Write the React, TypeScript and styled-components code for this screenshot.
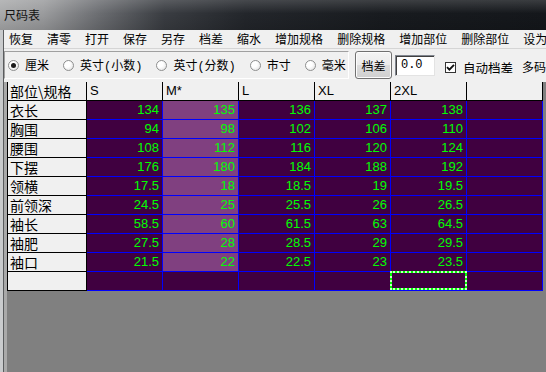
import React from 'react';
import styled, { createGlobalStyle, css } from 'styled-components';

const GlobalStyle = createGlobalStyle`
  html, body {
    margin: 0;
    padding: 0;
    background: #808080;
  }
`;

const CJK = `"Noto Sans CJK SC", "Liberation Sans", sans-serif`;
const NUM = `"Liberation Sans", "DejaVu Sans", sans-serif`;
// latin parts (brackets) get the wider mono widths, like the old system font
const LABEL = `"Liberation Mono", "Noto Sans CJK SC", monospace`;

const menuItems = ['恢复', '清零', '打开', '保存', '另存', '档差', '缩水', '增加规格', '删除规格', '增加部位', '删除部位', '设为'];
const units = ['厘米', '英寸(小数)', '英寸(分数)', '市寸', '毫米'];
const sizes = ['S', 'M*', 'L', 'XL', '2XL', ''];

const rows: { name: string; values: string[] }[] = [
  { name: '衣长', values: ['134', '135', '136', '137', '138'] },
  { name: '胸围', values: ['94', '98', '102', '106', '110'] },
  { name: '腰围', values: ['108', '112', '116', '120', '124'] },
  { name: '下摆', values: ['176', '180', '184', '188', '192'] },
  { name: '领横', values: ['17.5', '18', '18.5', '19', '19.5'] },
  { name: '前领深', values: ['24.5', '25', '25.5', '26', '26.5'] },
  { name: '袖长', values: ['58.5', '60', '61.5', '63', '64.5'] },
  { name: '袖肥', values: ['27.5', '28', '28.5', '29', '29.5'] },
  { name: '袖口', values: ['21.5', '22', '22.5', '23', '23.5'] },
  { name: '', values: ['', '', '', '', ''] },
];

const App: React.FC = () => {
  return (
    <>
      <GlobalStyle />
      <Window>
        <TitleBar>
          <Title>尺码表</Title>
        </TitleBar>
        <Frame>
          <Client>
            <MenuBar>
              {menuItems.map((m) => (
                <MenuItem key={m}>{m}</MenuItem>
              ))}
            </MenuBar>
            <ToolBar>
              <UnitGroup>
                {units.map((u, i) => (
                  <RadioLabel key={u}>
                    <Radio $checked={i === 0} />
                    <span>{u}</span>
                  </RadioLabel>
                ))}
              </UnitGroup>
              <Button>档差</Button>
              <TextBox>0.0</TextBox>
              <CheckLabel>
                <CheckBox>
                  <svg width="9" height="9" viewBox="0 0 9 9">
                    <path d="M1 4.2 L3.4 6.6 L8 1.8" stroke="#111" strokeWidth="1.9" fill="none" />
                  </svg>
                </CheckBox>
                <span>自动档差</span>
              </CheckLabel>
              <Extra>多码</Extra>
            </ToolBar>
            <GridArea>
              <Grid>
                <HeadCell $first>部位\规格</HeadCell>
                {sizes.map((s, i) => (
                  <HeadCell key={i}>{s}</HeadCell>
                ))}
                {rows.map((r, ri) => (
                  <React.Fragment key={ri}>
                    <NameCell>{r.name}</NameCell>
                    {r.values.map((v, ci) => (
                      <DataCell
                        key={ci}
                        $current={ci === 1 && r.name !== ''}
                        $selected={ri === rows.length - 1 && ci === 4}
                      >
                        {v}
                      </DataCell>
                    ))}
                    <DataCell />
                  </React.Fragment>
                ))}
              </Grid>
            </GridArea>
          </Client>
        </Frame>
      </Window>
    </>
  );
};

const Window = styled.div`
  width: 546px;
  height: 372px;
  display: flex;
  flex-direction: column;
  overflow: hidden;
`;

const TitleBar = styled.div`
  height: 30px;
  flex: none;
  display: flex;
  align-items: center;
  padding-left: 4px;
  padding-bottom: 1px;
  box-sizing: border-box;
  background:
    linear-gradient(to bottom, rgba(255, 255, 255, 0.16), rgba(255, 255, 255, 0) 45%, rgba(0, 0, 0, 0.12)),
    linear-gradient(to right, #a9aaab 0%, #9a9b9d 8%, #6c6e72 18%, #3a3d42 30%, #23262b 45%, #181b1f 70%, #14171b 100%);
`;

const Title = styled.span`
  font-family: ${CJK};
  font-size: 12px;
  color: #121212;
`;

const Frame = styled.div`
  flex: 1;
  display: flex;
  padding-left: 4px;
  background: linear-gradient(to right, #c9cbcd 0px, #c9cbcd 3px, #5a5c5e 3px, #5a5c5e 4px);
  min-height: 0;
`;

const Client = styled.div`
  flex: 1;
  display: flex;
  flex-direction: column;
  min-width: 0;
`;

const MenuBar = styled.div`
  height: 18px;
  flex: none;
  display: flex;
  background: #f0f0f0;
  white-space: nowrap;
`;

const MenuItem = styled.div`
  font-family: ${CJK};
  font-size: 12px;
  line-height: 18px;
  padding: 0 7px;
  color: #000;

  &:first-child {
    padding-left: 5px;
  }
`;

const ToolBar = styled.div`
  height: 34px;
  flex: none;
  display: flex;
  align-items: flex-start;
  background: #f0f0f0;
  border-top: 1px solid #d5d5d5;
  box-sizing: border-box;
  padding-top: 2px;
  white-space: nowrap;
`;

const UnitGroup = styled.div`
  display: flex;
  align-items: center;
  height: 28px;
  width: 350px;
  box-sizing: border-box;
  border: 1px solid #a0a0a0;
  border-right-color: #ffffff;
  border-bottom-color: #ffffff;
  padding-left: 3px;
  gap: 14px;
`;

const RadioLabel = styled.label`
  display: flex;
  align-items: center;
  gap: 6px;
  font-family: ${LABEL};
  font-size: 12px;
  color: #000;
`;

const Radio = styled.span<{ $checked?: boolean }>`
  width: 11px;
  height: 11px;
  flex: none;
  border-radius: 50%;
  box-sizing: border-box;
  border: 1px solid #8e8f8f;
  background: radial-gradient(circle at 35% 35%, #ffffff 35%, #dcdcdc 100%);
  position: relative;
  ${({ $checked }) =>
    $checked &&
    css`
      &::after {
        content: '';
        position: absolute;
        left: 2px;
        top: 2px;
        width: 5px;
        height: 5px;
        border-radius: 50%;
        background: #1a1a1a;
      }
    `}
`;

const Button = styled.div`
  margin-left: 6px;
  width: 37px;
  height: 28px;
  flex: none;
  box-sizing: border-box;
  border: 1px solid #707070;
  border-radius: 3px;
  background: linear-gradient(to bottom, #f4f4f4 0%, #ebebeb 50%, #dddddd 51%, #cfcfcf 100%);
  box-shadow: inset 0 0 0 1px #fcfcfc;
  display: flex;
  align-items: center;
  justify-content: center;
  font-family: ${CJK};
  font-size: 12px;
  color: #000;
`;

const TextBox = styled.div`
  margin: 4px 0 0 3px;
  width: 40px;
  height: 21px;
  flex: none;
  box-sizing: border-box;
  border: 1px solid #828790;
  border-right-color: #e3e3e3;
  border-bottom-color: #e3e3e3;
  box-shadow: inset 1px 1px 0 #404040;
  background: #fff;
  font-family: "Liberation Mono", monospace;
  font-size: 12px;
  line-height: 19px;
  padding-left: 5px;
  color: #000;
`;

const CheckLabel = styled.label`
  display: flex;
  align-items: center;
  gap: 7px;
  margin: 7px 0 0 10px;
  font-family: ${CJK};
  font-size: 12.5px;
  color: #000;
`;

const CheckBox = styled.span`
  width: 11px;
  height: 11px;
  flex: none;
  box-sizing: border-box;
  border: 1px solid #333;
  background: #fff;
  display: flex;
  align-items: center;
  justify-content: center;
`;

const Extra = styled.span`
  margin: 7px 0 0 9px;
  font-family: ${CJK};
  font-size: 12px;
  color: #000;
`;

const GridArea = styled.div`
  flex: 1;
  background: #808080;
  border-left: 3px solid #a9a9a9;
  min-height: 0;
`;

const Grid = styled.div`
  display: grid;
  grid-template-columns: 80px repeat(6, 76px);
  grid-auto-rows: 19px;
  width: max-content;
`;

const HeadCell = styled.div<{ $first?: boolean }>`
  box-sizing: border-box;
  height: 19px;
  background: #f0f0f0;
  border-left: ${({ $first }) => ($first ? '1px solid #000' : '0')};
  border-right: 1px solid #000;
  border-bottom: 1px solid #000;
  font-family: ${({ $first }) => ($first ? CJK : NUM)};
  font-size: ${({ $first }) => ($first ? '14px' : '13px')};
  line-height: 18px;
  padding-left: ${({ $first }) => ($first ? '2px' : '3px')};
  color: #000;
  white-space: nowrap;
`;

const NameCell = styled.div`
  box-sizing: border-box;
  height: 19px;
  background: #f0f0f0;
  border-left: 1px solid #000;
  border-right: 1px solid #000;
  border-bottom: 1px solid #000;
  font-family: ${CJK};
  font-size: 14px;
  line-height: 18px;
  padding-left: 2px;
  color: #000;
  white-space: nowrap;
`;

const DataCell = styled.div<{ $current?: boolean; $selected?: boolean }>`
  box-sizing: border-box;
  height: 19px;
  position: relative;
  background: ${({ $current }) => ($current ? '#804080' : '#400040')};
  border-right: 1px solid #0000ff;
  border-bottom: 1px solid #0000ff;
  font-family: ${NUM};
  font-size: 13px;
  line-height: 18px;
  text-align: right;
  padding-right: 3px;
  color: #00ff00;
  ${({ $selected }) =>
    $selected &&
    css`
      &::after {
        content: '';
        position: absolute;
        left: -1px;
        top: -1px;
        right: -1px;
        bottom: 0;
        box-shadow: inset 0 0 0 2px #00ff00;
        outline: 2px dotted #c8ffc8;
        outline-offset: -2px;
      }
    `}
`;

export default App;
